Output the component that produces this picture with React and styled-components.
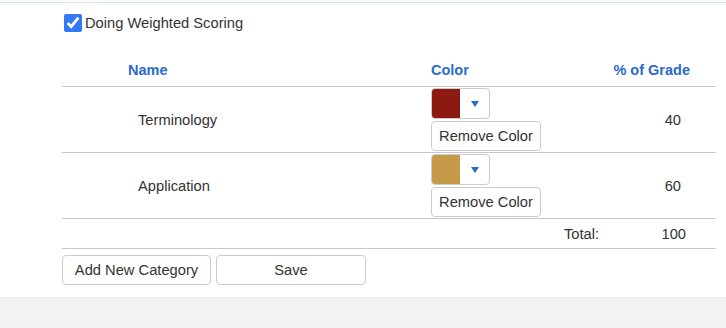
import React from "react";
import styled, { createGlobalStyle } from "styled-components";

const GlobalStyle = createGlobalStyle`
  html, body {
    margin: 0;
    padding: 0;
    background: #f2f2f2;
    font-family: "Liberation Sans", Arial, sans-serif;
    font-size: 14.7px;
    color: #333;
  }
`;

const Panel = styled.div`
  position: relative;
  background: #fff;
  padding-top: 2px;
  border-bottom: 1px solid #c4c4c4;

  &::after {
    content: "";
    position: absolute;
    left: 0;
    right: 0;
    top: 100%;
    height: 9px;
    background: linear-gradient(#f4f6f9 0, #cfdcec 2px, #f2f2f2 9px);
  }
`;

const Inner = styled.div`
  border-top: 1px solid #d9e3ee;
  padding: 11px 10px 12px 62px;
`;

const CheckRow = styled.label`
  display: flex;
  align-items: center;
  gap: 3px;
  height: 18px;
  margin-left: 2px;
`;

const Check = styled.input`
  width: 18px;
  height: 18px;
  margin: 0;
  accent-color: #3478f6;
`;

const Table = styled.table`
  width: 654px;
  margin-top: 22px;
  border-collapse: collapse;
  table-layout: fixed;
`;

const Th = styled.th`
  height: 32px;
  padding: 0 ${(p) => p.$pr || 0}px 0 ${(p) => p.$pl || 0}px;
  text-align: ${(p) => p.$align || "left"};
  font-weight: bold;
  font-size: 14.5px;
  color: #2c6acb;
  border-bottom: 1px solid #c8c8c8;
  vertical-align: middle;
`;

const Td = styled.td`
  padding: 0 ${(p) => p.$pr || 0}px 0 ${(p) => p.$pl || 0}px;
  text-align: ${(p) => p.$align || "left"};
  border-bottom: 1px solid #c8c8c8;
  vertical-align: middle;
`;

const ColorCell = styled.div`
  display: flex;
  flex-direction: column;
  align-items: flex-start;
  gap: 2px;
  padding: 1px 0;
`;

const Picker = styled.div`
  display: flex;
  width: 59px;
  height: 31px;
  box-sizing: border-box;
  border: 1px solid #ccc;
  border-radius: 4px;
  overflow: hidden;
`;

const Swatch = styled.div`
  width: 28px;
  background: ${(p) => p.$color};
`;

const Arrow = styled.div`
  flex: 1;
  display: flex;
  align-items: center;
  justify-content: center;
  &::after {
    content: "";
    border-left: 4px solid transparent;
    border-right: 4px solid transparent;
    border-top: 6px solid #2c6acb;
  }
`;

const Button = styled.button`
  box-sizing: border-box;
  width: ${(p) => p.$w}px;
  height: 30px;
  background: #fff;
  border: 1px solid #ccc;
  border-radius: 4px;
  font-family: inherit;
  font-size: 14.7px;
  color: #333;
  padding: 0;
`;

const TotalRow = styled.div`
  display: flex;
  justify-content: flex-end;
  align-items: center;
  height: 29px;
  padding-right: 30px;
`;

const TotalValue = styled.span`
  width: 87px;
  text-align: right;
`;

const Actions = styled.div`
  display: flex;
  gap: 5px;
  margin-top: 6px;
`;

const categories = [
  { name: "Terminology", color: "#8d1a11", pct: 40 },
  { name: "Application", color: "#c69b47", pct: 60 },
];

export default function App() {
  return (
    <>
      <GlobalStyle />
      <Panel>
        <Inner>
          <CheckRow>
            <Check type="checkbox" defaultChecked />
            Doing Weighted Scoring
          </CheckRow>
          <Table>
            <colgroup>
              <col style={{ width: 363 }} />
              <col style={{ width: 126 }} />
              <col style={{ width: 165 }} />
            </colgroup>
            <thead>
              <tr>
                <Th $pl={66}>Name</Th>
                <Th $pl={6}>Color</Th>
                <Th $align="right" $pr={26}>% of Grade</Th>
              </tr>
            </thead>
            <tbody>
              {categories.map((c) => (
                <tr key={c.name}>
                  <Td $pl={76}>{c.name}</Td>
                  <Td $pl={6}>
                    <ColorCell>
                      <Picker>
                        <Swatch $color={c.color} />
                        <Arrow />
                      </Picker>
                      <Button $w={110}>Remove Color</Button>
                    </ColorCell>
                  </Td>
                  <Td $align="right" $pr={35}>{c.pct}</Td>
                </tr>
              ))}
              <tr>
                <Td colSpan={3}>
                  <TotalRow>
                    Total:
                    <TotalValue>100</TotalValue>
                  </TotalRow>
                </Td>
              </tr>
            </tbody>
          </Table>
          <Actions>
            <Button $w={149}>Add New Category</Button>
            <Button $w={150}>Save</Button>
          </Actions>
        </Inner>
      </Panel>
    </>
  );
}
